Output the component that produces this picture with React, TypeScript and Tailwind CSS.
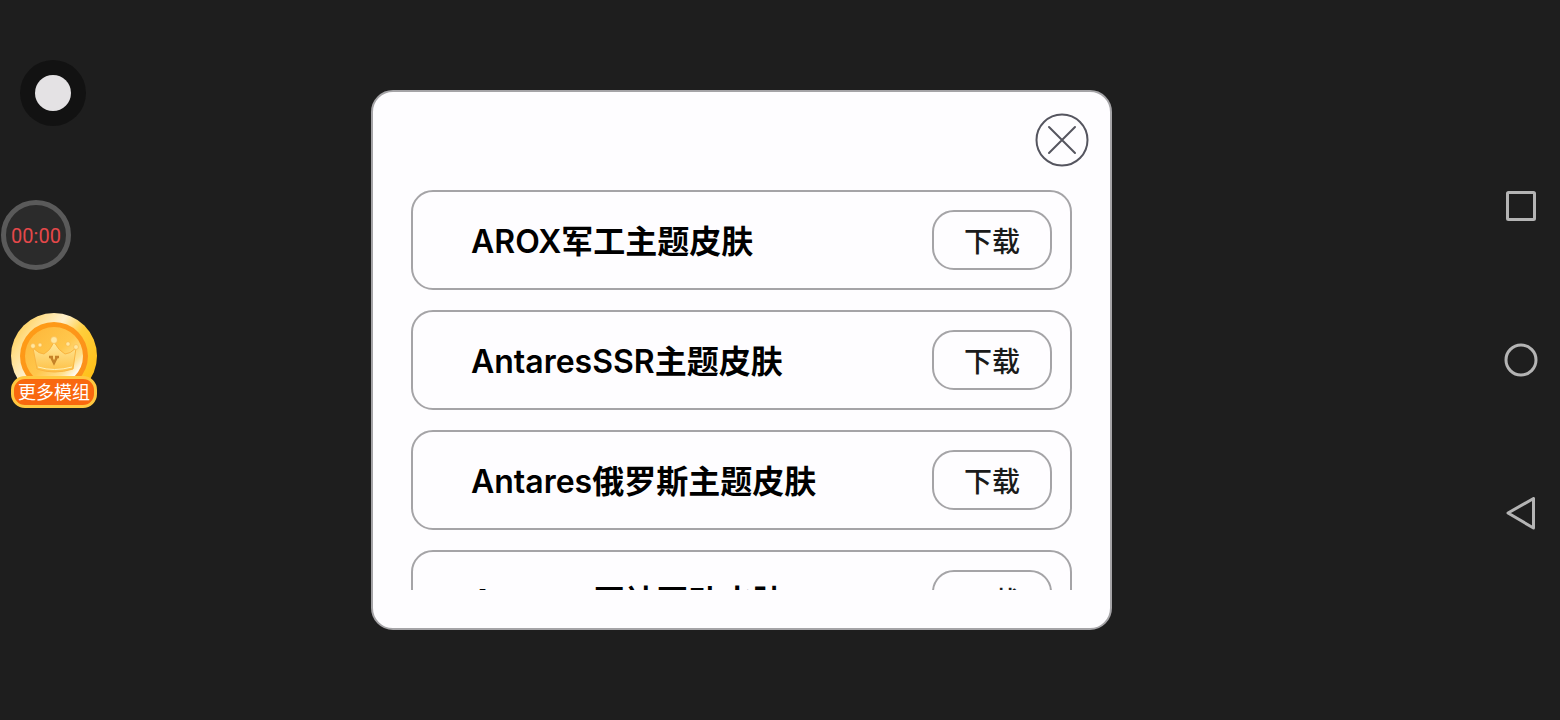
import clsx from "clsx";

interface Skin {
  id: number;
  name: string;
}

const skins: Skin[] = [
  { id: 1, name: "AROX军工主题皮肤" },
  { id: 2, name: "AntaresSSR主题皮肤" },
  { id: 3, name: "Antares俄罗斯主题皮肤" },
  { id: 4, name: "Antares原神互动皮肤" },
];

const CrownBadge = () => (
  <svg viewBox="0 0 86 86" className="block size-[86px]" aria-hidden="true">
    <defs>
      <linearGradient id="rim" x1="0" y1="0.1" x2="1" y2="0.8">
        <stop offset="0" stopColor="#ffc63c" />
        <stop offset="0.2" stopColor="#ffdf8c" />
        <stop offset="0.4" stopColor="#fff0cc" />
        <stop offset="0.6" stopColor="#ffce3c" />
        <stop offset="1" stopColor="#ffbd12" />
      </linearGradient>
      <linearGradient id="ring" x1="0" y1="0" x2="1" y2="1">
        <stop offset="0" stopColor="#ff9d16" />
        <stop offset="1" stopColor="#fb8e1c" />
      </linearGradient>
      <linearGradient id="face" x1="0" y1="0" x2="1" y2="1">
        <stop offset="0" stopColor="#fdb537" />
        <stop offset="0.5" stopColor="#ffc74c" />
        <stop offset="0.72" stopColor="#ffe08c" />
        <stop offset="0.84" stopColor="#fffaf0" />
        <stop offset="1" stopColor="#ffd060" />
      </linearGradient>
      <linearGradient id="crown" x1="0" y1="0" x2="0" y2="1">
        <stop offset="0" stopColor="#ffea9e" />
        <stop offset="1" stopColor="#fdc045" />
      </linearGradient>
    </defs>
    <circle cx="43" cy="43" r="43" fill="url(#rim)" />
    <circle cx="43" cy="43" r="34" fill="url(#ring)" />
    <circle cx="43" cy="43" r="29" fill="url(#face)" />
    <path
      d="M22 35 Q28 41 33 41 Q39 38 43 29 Q48 38 54 41 Q59 41 65 35 L62 56 Q43 62 26 56 Z"
      fill="url(#crown)"
      stroke="#f9b440"
      strokeWidth="1"
      strokeLinejoin="round"
    />
    <path d="M27 54 Q43 59 61 54" fill="none" stroke="#fff0b8" strokeWidth="1" />
    <g fill="#ffe7a0" stroke="#f8b544" strokeWidth="0.6">
      <circle cx="22" cy="33" r="2.4" />
      <circle cx="29" cy="32" r="2" />
      <circle cx="43" cy="27" r="3.4" />
      <circle cx="57" cy="31" r="2.2" />
      <circle cx="65" cy="34" r="2.4" />
    </g>
    <path d="M38 44 H42 M44 44 H48 M40 44 L43 50 L46 44" fill="none" stroke="#c58228" strokeWidth="2.4" />
  </svg>
);

const FloatingTools = () => (
  <aside>
    <button
      aria-label="悬浮球"
      className="absolute left-5 top-[60px] flex size-[66px] items-center justify-center rounded-full bg-[#121212]"
    >
      <span className="size-9 rounded-full bg-[#e4e2e4]" />
    </button>
    <button className="absolute left-px top-[200px] flex size-[70px] items-center justify-center rounded-full border-[5px] border-[#5a5a5a] bg-[#2b2b2b] pt-0.5 font-[Roboto] text-xl text-[#e5484a]">
      00:00
    </button>
    <button className="absolute left-[11px] top-[313px] w-[86px]">
      <CrownBadge />
      <span className="relative -mt-[23px] flex h-8 items-center justify-center whitespace-nowrap rounded-[14px] border-[3px] border-[#ffc840] bg-[#f9680f] pt-0.5 text-lg text-white">
        更多模组
      </span>
    </button>
  </aside>
);

const SystemNav = () => (
  <nav className="absolute inset-y-0 right-[22px] flex flex-col items-center justify-center gap-[120px]">
    <button aria-label="最近任务">
      <svg viewBox="0 0 34 34" className="block size-[34px]" fill="none" stroke="#b4b4b4" strokeWidth="3">
        <rect x="3.5" y="3.5" width="27" height="27" rx="1" />
      </svg>
    </button>
    <button aria-label="主页">
      <svg viewBox="0 0 34 34" className="block size-[34px]" fill="none" stroke="#b4b4b4" strokeWidth="3">
        <circle cx="17" cy="17" r="15" />
      </svg>
    </button>
    <button aria-label="返回">
      <svg viewBox="0 0 34 34" className="block size-[34px]" fill="none" stroke="#b4b4b4" strokeWidth="3" strokeLinejoin="round">
        <path d="M4 16 L29.5 1.5 V31 Z" />
      </svg>
    </button>
  </nav>
);

const SkinRow = ({ skin }: { skin: Skin }) => (
  <li className="flex h-[100px] shrink-0 items-center justify-between rounded-[22px] border-2 border-[#a5a4a7] pl-[58px] pr-[18px]">
    <h2 className="pt-1 text-[32px] font-semibold leading-10 text-black">{skin.name}</h2>
    <button className="h-[60px] w-[120px] rounded-[22px] border-2 border-[#a5a4a7] pt-1 text-[28px] font-medium leading-10 text-[#1b1b1b]">
      下载
    </button>
  </li>
);

export default function App() {
  return (
    <div
      className={clsx(
        "relative flex min-h-screen items-center overflow-hidden bg-[#1e1e1e] pr-[77px]",
        "font-['Inter','Noto_Sans_CJK_SC',sans-serif]"
      )}
    >
      <FloatingTools />

      <main
        role="dialog"
        aria-label="主题皮肤"
        className="mx-auto flex h-[75vh] w-full max-w-[741px] flex-col rounded-[22px] border-2 border-[#a5a4a7] bg-[#fefdff] pb-[38px]"
      >
        <header className="flex h-[98px] shrink-0 justify-end pr-5 pt-5">
          <button aria-label="关闭" className="size-14">
            <svg viewBox="0 0 56 56" className="size-14" fill="none" stroke="#55555f" strokeWidth="2" strokeLinecap="round">
              <circle cx="28" cy="28" r="25.5" />
              <path d="M15 15 L41 41 M41 15 L15 41" />
            </svg>
          </button>
        </header>

        <ul className="mx-[38px] flex min-h-0 flex-1 flex-col gap-5 overflow-hidden">
          {skins.map((skin) => (
            <SkinRow key={skin.id} skin={skin} />
          ))}
        </ul>
      </main>

      <SystemNav />
    </div>
  );
}
